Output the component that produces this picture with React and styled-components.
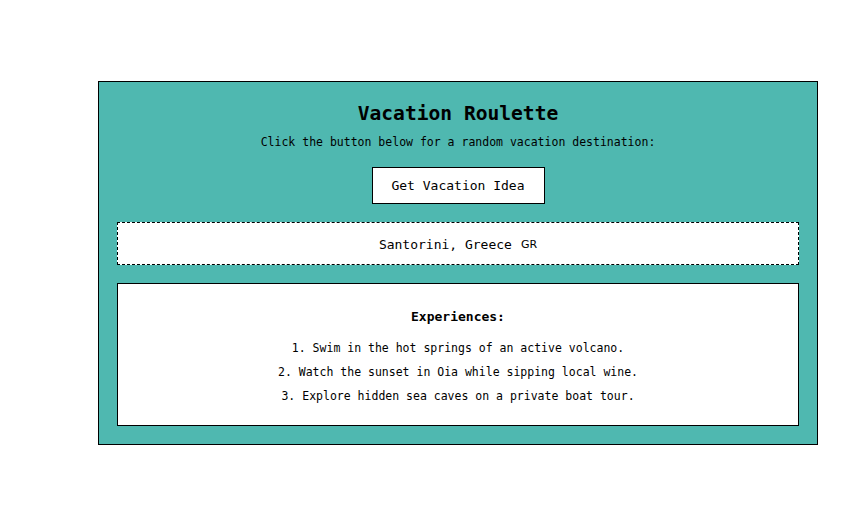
import React, { useState } from 'react';
import styled, { createGlobalStyle } from 'styled-components';

const GlobalStyle = createGlobalStyle`
  body {
    margin: 0;
    background: #ffffff;
    font-family: "DejaVu Sans Mono", "Liberation Mono", monospace;
  }
`;

const Page = styled.div`
  padding: 81px 0 0 98px;
`;

const Card = styled.div`
  width: 682px;
  padding: 18px;
  background-color: #4fb8b0;
  border: 1px solid #000;
  display: flex;
  flex-direction: column;
  align-items: center;
`;

const Title = styled.h1`
  margin: 2px 0 0;
  font-size: 19.6px;
  font-weight: bold;
  line-height: 24px;
  color: #000;
`;

const Intro = styled.p`
  margin: 9px 0 0;
  font-size: 11.5px;
  line-height: 14px;
  color: #000;
`;

const Button = styled.button`
  margin-top: 18px;
  width: 173px;
  height: 37px;
  border: 1px solid #000;
  background-color: #fff;
  font-family: "DejaVu Sans Mono", "Liberation Mono", monospace;
  font-size: 13px;
  color: #000;
  cursor: pointer;
`;

const Result = styled.div`
  margin-top: 18px;
  align-self: stretch;
  box-sizing: border-box;
  height: 43px;
  padding-top: 2px;
  border: 1px dashed #000;
  background-color: #fff;
  display: flex;
  align-items: center;
  justify-content: center;
  font-size: 13px;
  color: #000;
`;

const Flag = styled.span`
  margin-left: 9px;
  font-family: "DejaVu Sans", sans-serif;
  font-size: 11px;
`;

const Experiences = styled.div`
  margin-top: 18px;
  align-self: stretch;
  height: 143px;
  border: 1px solid #000;
  background-color: #fff;
  display: flex;
  flex-direction: column;
  align-items: center;
  padding-top: 25px;
  box-sizing: border-box;
`;

const SubTitle = styled.h3`
  margin: 0;
  font-size: 13px;
  line-height: 16px;
  font-weight: bold;
`;

const List = styled.ol`
  margin: 11px 0 0;
  padding: 0;
  list-style: none;
  text-align: center;
`;

const Item = styled.li`
  font-size: 11.5px;
  line-height: 24px;
`;

const destination = {
  place: 'Santorini, Greece',
  flag: 'GR',
  experiences: [
    'Swim in the hot springs of an active volcano.',
    'Watch the sunset in Oia while sipping local wine.',
    'Explore hidden sea caves on a private boat tour.',
  ],
};

const App = () => {
  const [idea] = useState(destination);
  return (
    <>
      <GlobalStyle />
      <Page>
        <Card>
          <Title>Vacation Roulette</Title>
          <Intro>Click the button below for a random vacation destination:</Intro>
          <Button>Get Vacation Idea</Button>
          <Result>
            {idea.place}
            <Flag>{idea.flag}</Flag>
          </Result>
          <Experiences>
            <SubTitle>Experiences:</SubTitle>
            <List>
              {idea.experiences.map((e, i) => (
                <Item key={i}>{i + 1}. {e}</Item>
              ))}
            </List>
          </Experiences>
        </Card>
      </Page>
    </>
  );
};

export default App;
